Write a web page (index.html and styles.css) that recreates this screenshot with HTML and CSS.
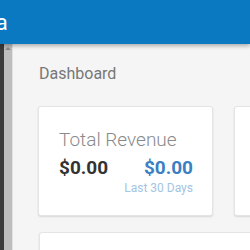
FILE: index.html
```html
<!DOCTYPE html>
<html lang="en">
<head>
    <meta charset="UTF-8">
    <title>Dashboard</title>
    <link rel="stylesheet" href="styles.css">
</head>
<body>
    <header class="topbar">
        <span class="brand">Zeta</span>
    </header>
    <div class="layout">
        <aside class="rail">
            <div class="rail-edge"></div>
            <div class="rail-track">
                <span class="rail-arrow"></span>
            </div>
        </aside>
        <main class="content">
            <h1 class="page-title">Dashboard</h1>
            <div class="cards">
                <div class="card">
                    <div class="card-title">Total Revenue</div>
                    <div class="card-row">
                        <span class="amount">$0.00</span>
                        <span class="amount amount-blue">$0.00</span>
                    </div>
                    <div class="card-note">Last 30 Days</div>
                </div>
                <div class="card"></div>
            </div>
            <div class="card card-wide"></div>
        </main>
    </div>
</body>
</html>
```

FILE: styles.css
```css
html, body {
    margin: 0;
    padding: 0;
}
body {
    width: 250px;
    height: 250px;
    overflow: hidden;
    background: #f5f5f5;
    font-family: Roboto, "Liberation Sans", sans-serif;
}
.topbar {
    height: 44px;
    background: #0b79c2;
    box-shadow: 0 2px 4px rgba(0, 0, 0, 0.3);
    position: relative;
    z-index: 2;
    display: flex;
    align-items: center;
    overflow: hidden;
}
.brand {
    color: #fff;
    font-size: 22px;
    margin-left: -36px;
}
.layout {
    display: flex;
    height: 206px;
}
.rail {
    display: flex;
    flex: none;
}
.rail-edge {
    width: 4px;
    background: #3a3a3a;
}
.rail-track {
    width: 8px;
    background: #bdbdbd;
    border-right: 1px solid #e2e2e2;
    position: relative;
}
.rail-arrow {
    position: absolute;
    top: 3px;
    left: 1px;
    border-left: 3px solid transparent;
    border-right: 3px solid transparent;
    border-bottom: 3px solid #888;
}
.content {
    flex: 1;
    padding: 0 0 0 25px;
    overflow: hidden;
}
.page-title {
    margin: 20px 0 0 1px;
    font-size: 16px;
    font-weight: 400;
    color: #777;
    line-height: 20px;
}
.cards {
    display: flex;
    gap: 21px;
    margin-top: 22px;
}
.card {
    flex: none;
    width: 175px;
    height: 110px;
    box-sizing: border-box;
    background: #fff;
    border: 1px solid #e4e4e4;
    border-radius: 3px;
    box-shadow: 0 1px 2px rgba(0, 0, 0, 0.12);
    padding: 22px 19px 0 20px;
}
.card-title {
    font-size: 19px;
    font-weight: 300;
    color: #8a8a8a;
    line-height: 22px;
    white-space: nowrap;
}
.card-row {
    display: flex;
    justify-content: space-between;
    margin-top: 5px;
}
.amount {
    font-size: 19px;
    font-weight: 700;
    color: #333;
    line-height: 24px;
}
.amount-blue {
    color: #3a80c3;
}
.card-note {
    text-align: right;
    font-size: 12px;
    color: #a3c4e2;
    margin-top: 1px;
}
.card-wide {
    width: 260px;
    margin: 16px 0 0 1px;
}
```
